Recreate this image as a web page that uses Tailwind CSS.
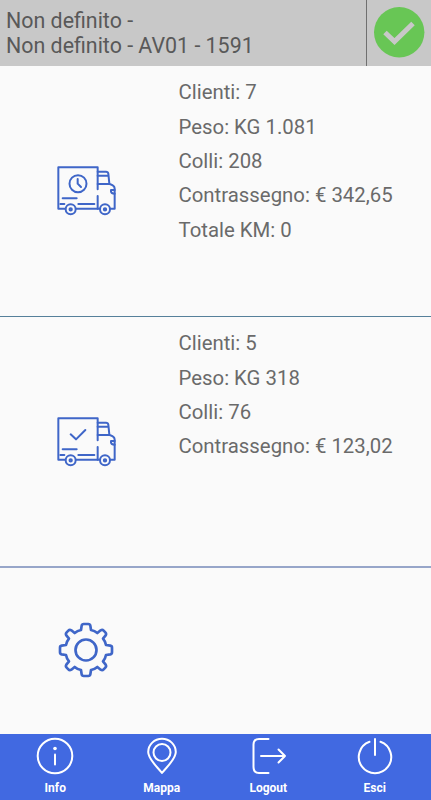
<!DOCTYPE html>
<html lang="it">
<head>
    <meta charset="UTF-8">
    <meta name="viewport" content="width=device-width, initial-scale=1.0">
    <title>Riepilogo giro</title>
    <script src="https://cdn.jsdelivr.net/npm/@tailwindcss/browser@4"></script>
</head>
<body class="h-screen flex flex-col overflow-hidden bg-[#fafafa] font-['Roboto',sans-serif] text-[#6a6a6a]">
    <!-- Header -->
    <header class="flex h-[66px] shrink-0 bg-[#c8c8c8] text-[#595959]">
        <div class="flex-1 pl-1.5 pt-2 text-[21.4px] leading-[25px] whitespace-nowrap">
            <p>Non definito -</p>
            <p>Non definito - AV01 - 1591</p>
        </div>
        <div class="w-[65px] border-l border-[#707070] pl-[7px] pt-[7px]">
            <svg class="size-[51px]" viewBox="0 0 51 51" fill="none">
                <circle cx="25.2" cy="25.3" r="25.2" fill="#68c655"/>
                <path d="M11 25.5L20.5 34.5L39 16.5" stroke="#c8c8c8" stroke-width="5"/>
            </svg>
        </div>
    </header>

    <main class="flex-1 min-h-0">
        <!-- Deliveries to do -->
        <section class="flex h-[251px] border-b border-[#56809a]">
            <div class="flex w-[178.5px] pl-[57px] pt-[99px]">
                <svg class="w-[60px] h-[52px]" viewBox="0 0 180 156" fill="none" stroke="#3f66c8" stroke-width="6" stroke-linecap="round" stroke-linejoin="round">
                    <path d="M24 131H4V7H122V73M122 93V131"/>
                    <path d="M10 117H22M17 100H59M64 117H112M57 131H128M160 131H173V71Q173 61 158 57H122M122 20H147Q153 20 154 26L157 56M122 32H153"/>
                    <path d="M173 75H162V80Q163 86 173 86"/>
                    <circle cx="41" cy="133" r="15"/>
                    <circle cx="41" cy="133" r="3.5"/>
                    <circle cx="144" cy="133" r="15"/>
                    <circle cx="144" cy="133" r="3.5"/>
                    <circle cx="63" cy="56" r="25.5"/>
                    <path d="M62 42V56L72 66"/>
                </svg>
            </div>
            <div class="pt-[9.2px] text-[20.37px] leading-[34.4px] whitespace-nowrap">
                <p>Clienti: 7</p>
                <p>Peso: KG 1.081</p>
                <p>Colli: 208</p>
                <p>Contrassegno: € 342,65</p>
                <p>Totale KM: 0</p>
            </div>
        </section>

        <!-- Deliveries done -->
        <section class="flex h-[251px] border-b-2 border-[#97a6c9]">
            <div class="flex w-[178.5px] pl-[57px] pt-[99px]">
                <svg class="w-[60px] h-[52px]" viewBox="0 0 180 156" fill="none" stroke="#3f66c8" stroke-width="6" stroke-linecap="round" stroke-linejoin="round">
                    <path d="M24 131H4V7H122V73M122 93V131"/>
                    <path d="M10 117H22M17 100H59M64 117H112M57 131H128M160 131H173V71Q173 61 158 57H122M122 20H147Q153 20 154 26L157 56M122 32H153"/>
                    <path d="M173 75H162V80Q163 86 173 86"/>
                    <circle cx="41" cy="133" r="15"/>
                    <circle cx="41" cy="133" r="3.5"/>
                    <circle cx="144" cy="133" r="15"/>
                    <circle cx="144" cy="133" r="3.5"/>
                    <path d="M41 55L57 70L85 42"/>
                </svg>
            </div>
            <div class="pt-[9.2px] text-[20.37px] leading-[34.4px] whitespace-nowrap">
                <p>Clienti: 5</p>
                <p>Peso: KG 318</p>
                <p>Colli: 76</p>
                <p>Contrassegno: € 123,02</p>
            </div>
        </section>

        <!-- Settings -->
        <section class="pl-[58px] pt-[54px]">
            <svg class="size-14" viewBox="-84 -84 168 168" fill="none" stroke="#3f66c8" stroke-width="8" stroke-linejoin="round">
                <circle r="31.5"/>
                <path d="M-13 -73Q-12 -78 -7 -78H7Q12 -78 13 -73L15 -60Q26 -58 34 -51L44 -59Q49 -62 53 -58L58 -53Q62 -49 59 -44L51 -34Q58 -26 60 -15L73 -13Q78 -12 78 -7V7Q78 12 73 13L60 15Q58 26 51 34L59 44Q62 49 58 53L53 58Q49 62 44 59L34 51Q26 58 15 60L13 73Q12 78 7 78H-7Q-12 78 -13 73L-15 60Q-26 58 -34 51L-44 59Q-49 62 -53 58L-58 53Q-62 49 -59 44L-51 34Q-58 26 -60 15L-73 13Q-78 12 -78 7V-7Q-78 -12 -73 -13L-60 -15Q-58 -26 -51 -34L-59 -44Q-62 -49 -58 -53L-53 -58Q-49 -62 -44 -59L-34 -51Q-26 -58 -15 -60Z"/>
            </svg>
        </section>
    </main>

    <!-- Bottom bar -->
    <nav class="grid grid-cols-4 h-[66px] shrink-0 pl-[2px] pr-[3px] pt-[3px] bg-[#4169e1] text-white text-[12px] leading-4 font-bold">
        <a class="flex flex-col items-center gap-[5px]">
            <svg class="size-[38px]" viewBox="0 0 38 38" fill="none" stroke="currentColor" stroke-width="2" stroke-linecap="round">
                <circle cx="19" cy="19" r="17.3"/>
                <path d="M19 17.5V27.5"/>
                <circle cx="19" cy="11.5" r="1.8" fill="currentColor" stroke="none"/>
            </svg>
            <span>Info</span>
        </a>
        <a class="flex flex-col items-center gap-[5px]">
            <svg class="size-[38px]" viewBox="0 0 38 38" fill="none" stroke="currentColor" stroke-width="2" stroke-linejoin="round">
                <path d="M19 36C15 30.5 5.2 22.5 5.2 15A13.8 13.3 0 0 1 32.8 15C32.8 22.5 23 30.5 19 36Z"/>
                <circle cx="19" cy="15.5" r="8.5"/>
            </svg>
            <span>Mappa</span>
        </a>
        <a class="flex flex-col items-center gap-[5px]">
            <svg class="size-[38px]" viewBox="0 0 38 38" fill="none" stroke="currentColor" stroke-width="2" stroke-linecap="round" stroke-linejoin="round">
                <path d="M19.5 2H10Q4.5 2 4.5 7.5V30Q4.5 36 10 36H19.5"/>
                <path d="M12 19H36M29.5 12.5L36 19L29.5 25.5"/>
            </svg>
            <span>Logout</span>
        </a>
        <a class="flex flex-col items-center gap-[5px]">
            <svg class="size-[38px]" viewBox="0 0 38 38" fill="none" stroke="currentColor" stroke-width="2" stroke-linecap="round">
                <path d="M13.5 4.8A16.2 16.2 0 1 0 24.5 4.8"/>
                <path d="M19 2V18"/>
            </svg>
            <span>Esci</span>
        </a>
    </nav>
</body>
</html>
